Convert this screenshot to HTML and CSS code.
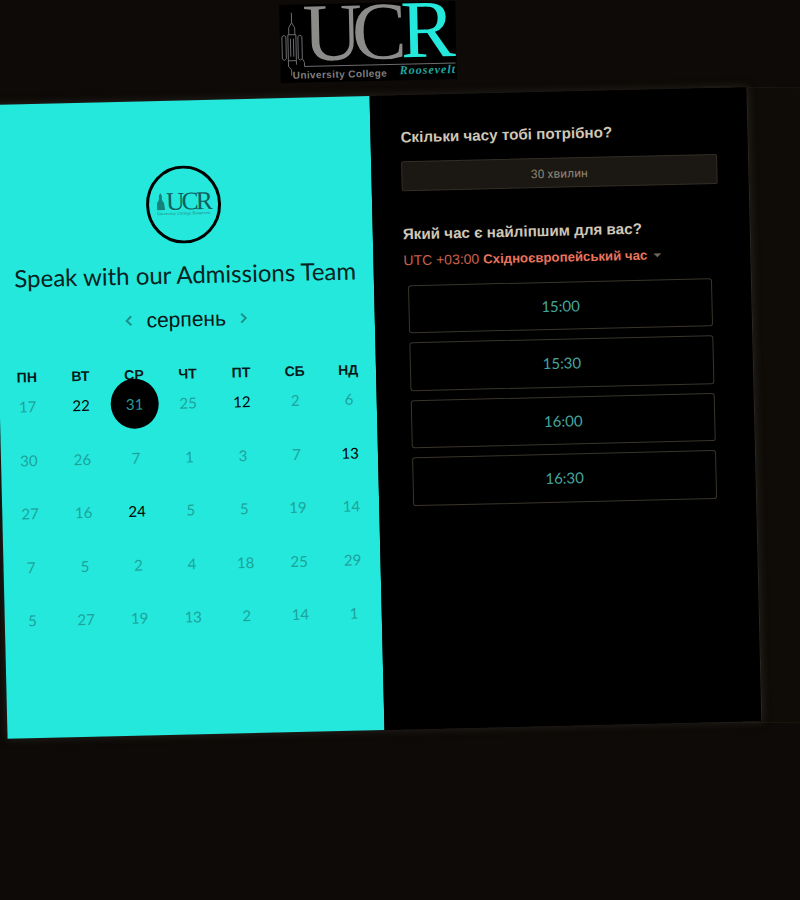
FILE: index.html
```html
<!DOCTYPE html>
<html lang="en">
<head>
    <meta charset="UTF-8">
    <meta name="viewport" content="width=device-width, initial-scale=1.0">
    <title>UCR Admissions</title>
    <link rel="stylesheet" href="styles.css">
</head>
<body>
    <div class="top-logo">
        <svg width="176" height="78" viewBox="0 0 176 78">
            <rect width="176" height="78" fill="#000"/>
            <g fill="none" stroke="#77777a" stroke-width="0.9">
                <path d="M12 8v10M12 18l-3 5v7M12 18l3 5v7M8 30h8v26H8zM10.500 34v18M13.500 34v18"/>
                <path d="M2 32q2-3 4 0v22q-2 3-4 0zM18 32q2-3 4 0v22q-2 3-4 0z"/>
                <path d="M8 56v6l3 3v6M16 56v4M22 54l2 4v4h151"/>
            </g>
            <text class="logo-u" x="23" y="56">UC</text>
            <text class="logo-r" x="121" y="55">R</text>
            <text class="logo-line" x="12" y="74">University College</text>
            <text class="logo-script" x="119" y="72">Roosevelt</text>
        </svg>
    </div>

    <div class="side-panel"></div>

    <div class="card">
        <div class="calendar">
            <div class="badge">
                <svg width="75" height="78" viewBox="0 0 75 78">
                    <ellipse cx="37.500" cy="39" rx="36" ry="37.500" fill="none" stroke="#000" stroke-width="3"/>
                    <path d="M11 44v-7l2-3v-4l1.500-3 1.500 3v4l2 3 1 7z" fill="#16807b"/>
                    <text class="badge-ucr" x="20" y="44">UCR</text>
                    <text class="badge-small" x="11" y="49" textLength="53">University College Roosevelt</text>
                </svg>
            </div>
            <h1 class="title">Speak with our Admissions Team</h1>
            <div class="month">
                <span class="arrow">
                    <svg width="8" height="12" viewBox="0 0 8 12"><path d="M6.500 1.500 2 6l4.500 4.500" fill="none" stroke="#1b8f88" stroke-width="2"/></svg>
                </span>
                <span class="month-name">серпень</span>
                <span class="arrow">
                    <svg width="8" height="12" viewBox="0 0 8 12"><path d="M1.500 1.500 6 6l-4.500 4.500" fill="none" stroke="#1b8f88" stroke-width="2"/></svg>
                </span>
            </div>
            <div class="weekdays">
                <span>ПН</span><span>ВТ</span><span>СР</span><span>ЧТ</span><span>ПТ</span><span>СБ</span><span>НД</span>
            </div>
            <div class="days">
                <span>17</span><span class="on">22</span><span class="picked">31</span><span>25</span><span class="on">12</span><span>2</span><span>6</span>
                <span>30</span><span>26</span><span>7</span><span>1</span><span>3</span><span>7</span><span class="on">13</span>
                <span>27</span><span>16</span><span class="on">24</span><span>5</span><span>5</span><span>19</span><span>14</span>
                <span>7</span><span>5</span><span>2</span><span>4</span><span>18</span><span>25</span><span>29</span>
                <span>5</span><span>27</span><span>19</span><span>13</span><span>2</span><span>14</span><span>1</span>
            </div>
        </div>
        <div class="times">
            <h2 class="question">Скільки часу тобі потрібно?</h2>
            <div class="duration">30 хвилин</div>
            <h2 class="question second">Який час є найліпшим для вас?</h2>
            <div class="zone">UTC +03:00 <b>Східноєвропейський час</b><i class="caret"></i></div>
            <div class="slots">
                <div class="slot">15:00</div>
                <div class="slot">15:30</div>
                <div class="slot">16:00</div>
                <div class="slot">16:30</div>
            </div>
        </div>
    </div>
</body>
</html>
```

FILE: styles.css
```css
body {
    margin: 0;
    height: 900px;
    overflow: hidden;
    position: relative;
    background: #0d0a07;
    font-family: "Liberation Sans", sans-serif;
}

.top-logo {
    position: absolute;
    left: 280px;
    top: 3px;
    transform: rotate(-1.3deg);
}

.top-logo svg {
    display: block;
    overflow: visible;
}

.logo-u {
    font: 82px "Liberation Serif", serif;
    fill: #8b8b89;
    letter-spacing: -10px;
}

.logo-r {
    font: 82px "Liberation Serif", serif;
    fill: #25e8dc;
}

.logo-line {
    font: bold 10px "Liberation Sans", sans-serif;
    fill: #7f7f7d;
    letter-spacing: 0.400px;
}

.logo-script {
    font: italic bold 12px "Liberation Serif", serif;
    fill: #1fa8a0;
    letter-spacing: 1px;
}

.side-panel {
    position: absolute;
    left: 700px;
    top: 87px;
    width: 140px;
    height: 634px;
    background: #0f0c08;
    border: 1px solid #191611;
    transform: rotate(0.6deg);
}

.card {
    position: absolute;
    left: 0;
    top: 95.5px;
    width: 755px;
    height: 634px;
    display: flex;
    transform: rotate(-1.35deg);
    box-shadow: 0 0 8px rgba(70, 66, 60, 0.5);
}

.calendar {
    width: 377px;
    background: #25e8dc;
    padding-top: 64.500px;
    box-sizing: border-box;
}

.badge {
    display: flex;
    justify-content: center;
    height: 78px;
}

.badge-ucr {
    font: 25.500px "Liberation Serif", serif;
    fill: #0f5f5e;
    letter-spacing: -2.800px;
}

.badge-small {
    font: 4px "Liberation Serif", serif;
    fill: #14716c;
}

.title {
    margin: 15px 0 0;
    text-align: center;
    font: 400 24px/32px Lato, sans-serif;
    color: #082222;
    white-space: nowrap;
}

.month {
    display: flex;
    justify-content: center;
    align-items: center;
    gap: 14px;
    margin-top: 16px;
    height: 26px;
}

.month-name {
    font-size: 21px;
    color: #0a1616;
}

.arrow {
    display: flex;
}

.weekdays, .days {
    display: grid;
    grid-template-columns: repeat(7, 1fr);
    padding: 0 1px;
    text-align: center;
}

.weekdays {
    margin-top: 31px;
    height: 20px;
    font-size: 14px;
    line-height: 20px;
    font-weight: bold;
    color: #071a1a;
}

.days {
    margin-top: -7px;
    font: 15px Lato, sans-serif;
    color: #1ba39b;
    grid-auto-rows: 53.500px;
}

.days span {
    display: flex;
    align-items: center;
    justify-content: center;
}

.days .on {
    color: #000;
}

.days .picked {
    width: 48px;
    height: 50px;
    margin: auto;
    border-radius: 50%;
    background: #000;
    color: #2a9a9c;
}

.times {
    width: 378px;
    background: #000;
    padding: 32px 30px 0 30px;
    box-sizing: border-box;
    border-right: 1px solid #2b2721;
}

.question {
    margin: 0;
    font-size: 15.200px;
    line-height: 20px;
    font-weight: bold;
    color: #cfc6b6;
}

.question.second {
    margin-top: 33px;
}

.duration {
    margin-top: 14px;
    height: 30px;
    text-align: center;
    box-sizing: border-box;
    width: 316px;
    font: 12px/30px Roboto, sans-serif;
    color: #8d8676;
    background: #1b1712;
    border: 1px solid #332e27;
    border-radius: 2px;
}

.zone {
    margin-top: 6.500px;
    font-size: 14px;
    line-height: 18px;
    color: #c8604a;
}

.zone b {
    color: #ea745c;
    font-size: 13.200px;
}

.caret {
    display: inline-block;
    margin-left: 6px;
    vertical-align: 2px;
    border: 4px solid transparent;
    border-top-color: #6d665a;
    border-bottom: 0;
}

.slots {
    display: flex;
    flex-direction: column;
    gap: 9px;
    margin: 15px 0 0 4px;
    width: 304px;
}

.slot {
    height: 48.600px;
    box-sizing: border-box;
    text-align: center;
    font: 15px/46px Lato, sans-serif;
    color: #46a79e;
    border: 1px solid #3a352c;
    border-radius: 3px;
}
```
